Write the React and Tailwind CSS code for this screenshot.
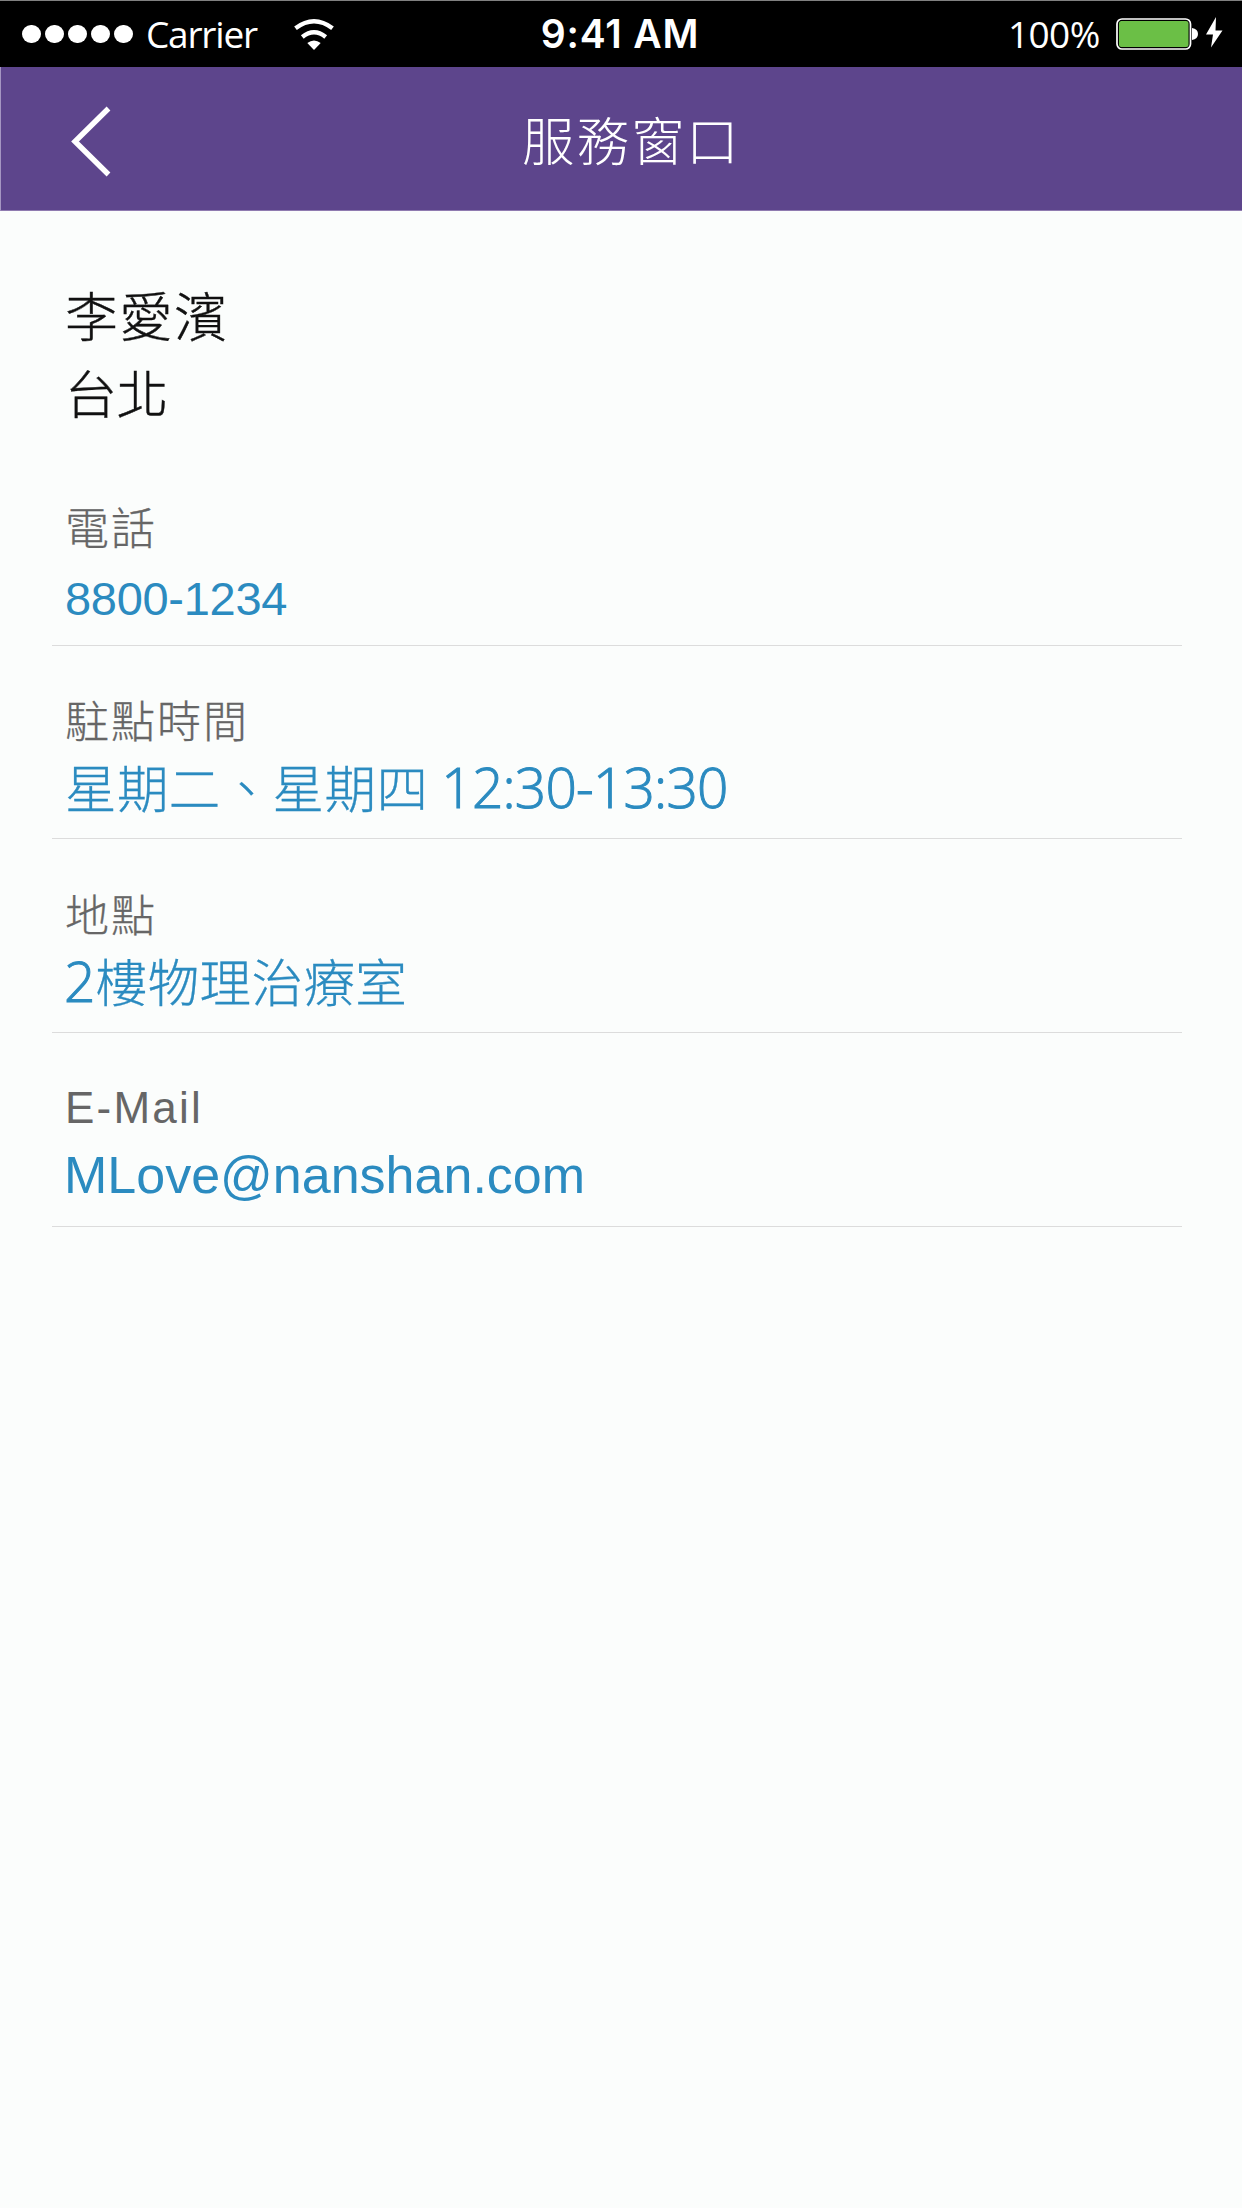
const cjk = "font-['Noto_Sans_CJK_TC',sans-serif]";
const arial = "font-['Liberation_Sans',Arial,sans-serif]";

const rows = [
  {
    label: "電話",
    labelClass: `${cjk} font-light [-webkit-text-stroke:0.3px] pt-[44px] h-[104px] text-[44px] tracking-[2px]`,
    value: "8800-1234",
    valueClass: `${arial} h-[86px] text-[47px] leading-[86px] tracking-[-0.3px]`,
    rowClass: "h-[194px]",
  },
  {
    label: "駐點時間",
    labelClass: `${cjk} font-light [-webkit-text-stroke:0.3px] pt-[43px] h-[103px] text-[44px] tracking-[2px]`,
    value: (
      <>
        星期二、星期四
        <span className="ml-[13px] font-['Open_Sans',sans-serif] text-[55px] font-light tracking-[-0.8px] [-webkit-text-stroke:1px]">12:30-13:30</span>
      </>
    ),
    valueClass: `${cjk} font-light [-webkit-text-stroke:0.3px] h-[74px] text-[51.5px] leading-[74px] tracking-[0.4px]`,
    rowClass: "h-[193px]",
  },
  {
    label: "地點",
    labelClass: `${cjk} font-light [-webkit-text-stroke:0.3px] pt-[44px] h-[104px] text-[44px] tracking-[2px]`,
    value: (
      <>
        <span className="-ml-px font-['Open_Sans',sans-serif] text-[55px] font-light [-webkit-text-stroke:1px]">2</span>
        樓物理治療室
      </>
    ),
    valueClass: `${cjk} font-light [-webkit-text-stroke:0.3px] h-[74px] text-[51.5px] leading-[74px] tracking-[0.4px]`,
    rowClass: "h-[194px]",
  },
  {
    label: "E-Mail",
    labelClass: `${arial} pt-[45px] h-[105px] text-[44px] tracking-[2.2px]`,
    value: "MLove@nanshan.com",
    valueClass: `${arial} h-[74px] text-[52px] leading-[74px] -ml-px`,
    rowClass: "h-[194px]",
  },
];

function StatusBar() {
  return (
    <div className="flex h-[67px] items-center border-t border-[#808080] bg-black text-white">
      <div className="flex w-[520px] items-center">
        <div className="ml-[22px] flex gap-[4.5px]">
          {[0, 1, 2, 3, 4].map((i) => (
            <span key={i} className="size-[18.6px] rounded-full bg-white" />
          ))}
        </div>
        <span className="ml-[13px] w-[148px] font-['Open_Sans',sans-serif] text-[37px] leading-[64px] tracking-[-1.2px]">Carrier</span>
        <svg className="h-[31px] w-[40px]" viewBox="0 0 40 31" fill="none">
          <path d="M1.500 9.300Q20-4.700 38.500 9.300" stroke="#fff" strokeWidth="4.400" />
          <path d="M8.300 18Q20 8.500 31.700 18" stroke="#fff" strokeWidth="4.400" />
          <path d="M13.300 24Q20 19 26.700 24L20 31Z" fill="#fff" />
        </svg>
      </div>
      <div className="w-[200px] text-center font-['Inter',sans-serif] text-[39px] font-semibold leading-[64px] tracking-[0.8px]">9:41 AM</div>
      <div className="flex flex-1 items-center">
        <span className="ml-[288px] w-[108px] font-['Open_Sans',sans-serif] text-[37px] leading-[64px] tracking-[-0.6px]">100%</span>
        <svg className="h-[34px] w-[110px]" viewBox="0 0 110 34">
          <rect x="1" y="2" width="73.500" height="30" rx="5" fill="none" stroke="#fff" strokeWidth="1.700" />
          <rect x="3" y="4" width="69.500" height="26" rx="2.500" fill="#6bbf46" />
          <path d="M76 11Q82 12 82 17Q82 22 76 23Z" fill="#fff" />
          <path d="M100 0L90 17.500H97L95 30.500L106.500 13.500H99.500Z" fill="#fff" />
        </svg>
      </div>
    </div>
  );
}

export default function App() {
  return (
    <div className="flex h-[2208px] w-[1242px] flex-col overflow-hidden bg-[#fbfdfc]">
      <StatusBar />
      <header className="flex h-[144px] items-center border-b border-l border-b-[#8f7bb0] border-l-[#a596c2] bg-[#5d458c] text-white">
        <svg className="ml-[69px] mt-1 h-[72px] w-[42px]" viewBox="0 0 42 72" fill="none">
          <path d="M38.500 3.500L5 36.500L38.500 69.500" stroke="#fff" strokeWidth="5.400" />
        </svg>
        <h1 className="ml-[410px] font-['Noto_Sans_CJK_TC',sans-serif] text-[52.5px] font-light leading-[139px] tracking-[2.2px]">服務窗口</h1>
      </header>
      <main className="ml-[52px] w-[1130px]">
        <div className="h-[241px] pl-[13px] pt-[64px] font-['Noto_Sans_CJK_TC',sans-serif] font-light text-[#111] [-webkit-text-stroke:0.4px]">
          <div className="h-[78px] text-[53px] leading-[78px] tracking-[1.5px]">李愛濱</div>
          <div className="h-[78px] text-[52px] leading-[78px] tracking-[-0.5px]">台北</div>
        </div>
        {rows.map((r) => (
          <section key={r.label} className={`border-b border-[#dcdcdc] pl-[13px] whitespace-nowrap ${r.rowClass}`}>
            <div className={`leading-[60px] text-[#666] ${r.labelClass}`}>{r.label}</div>
            <div className={`text-[#2b8bc0] ${r.valueClass}`}>{r.value}</div>
          </section>
        ))}
      </main>
    </div>
  );
}
